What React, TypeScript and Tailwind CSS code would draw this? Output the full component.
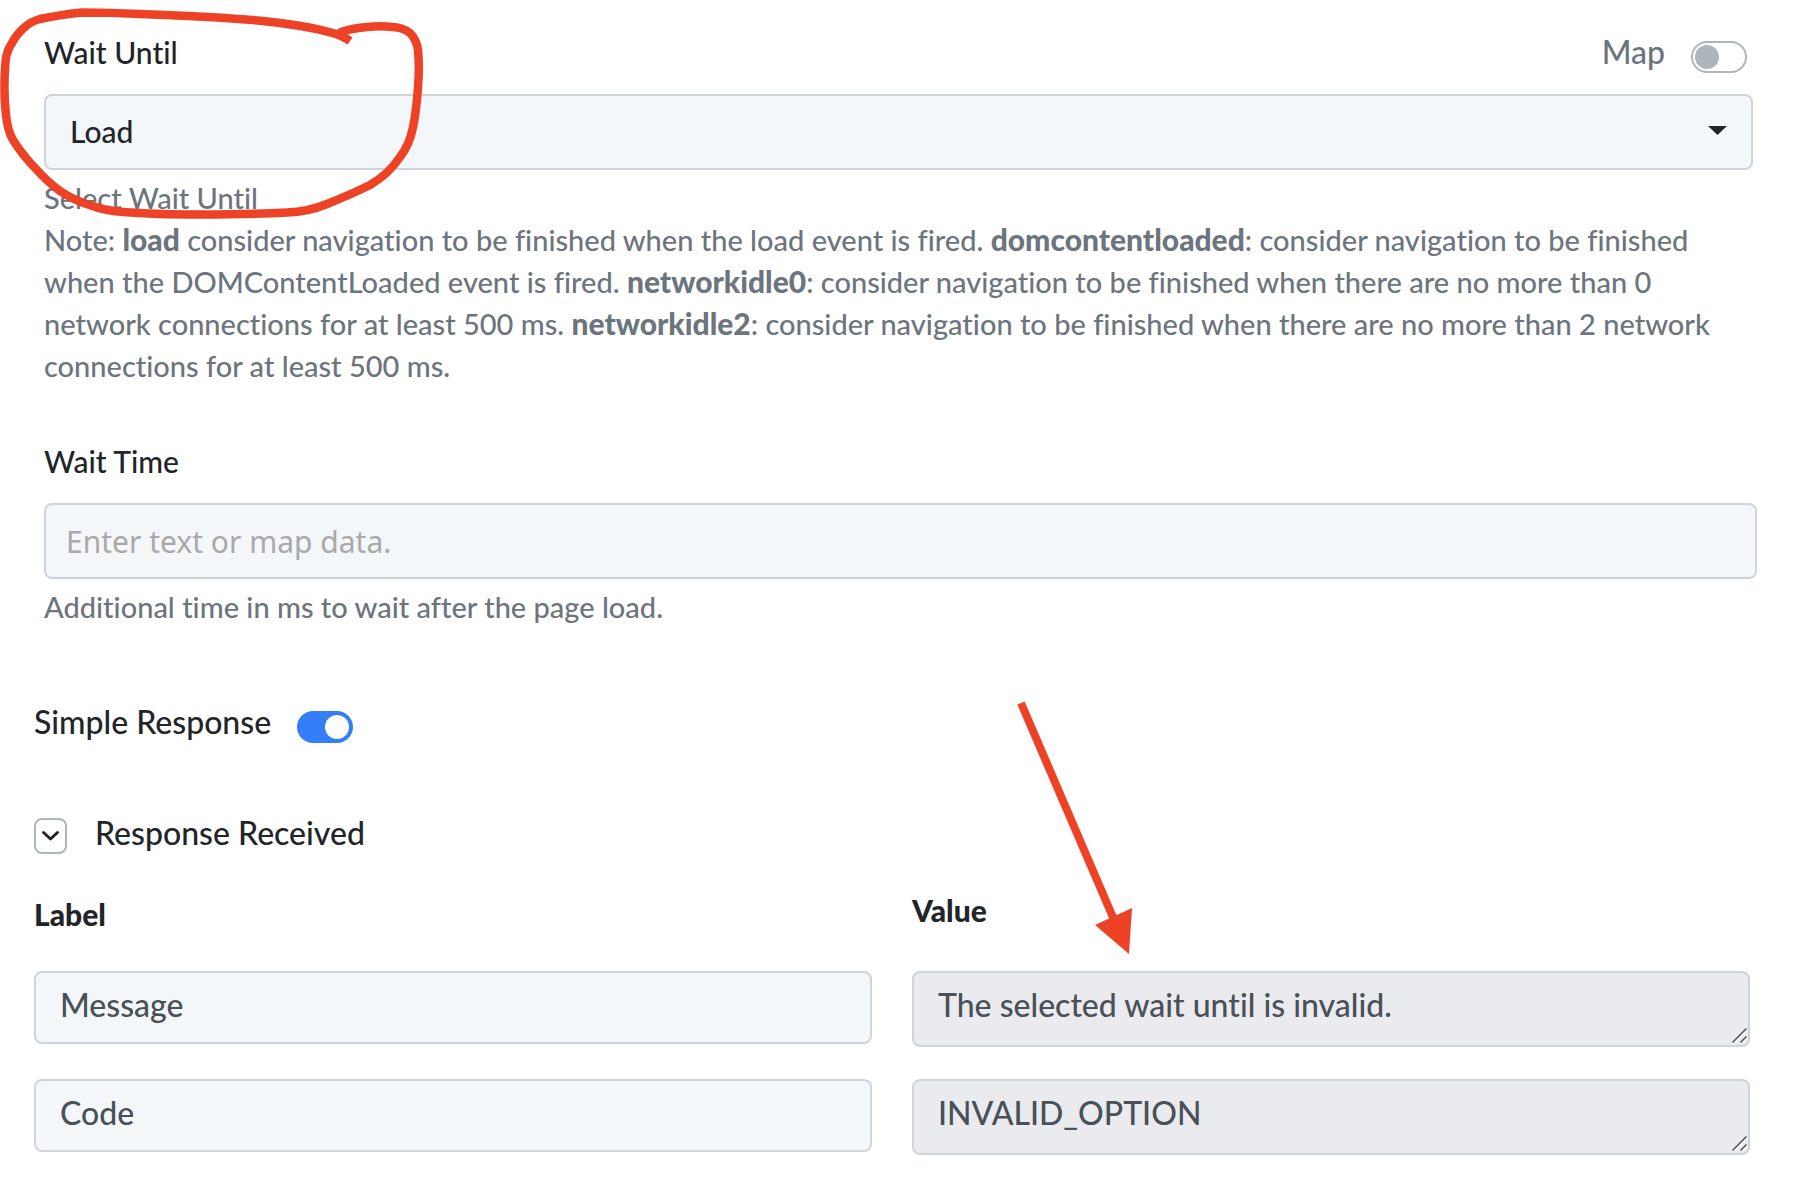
import { useState } from "react";

interface ToggleProps {
  id: string;
  checked: boolean;
  onChange: (checked: boolean) => void;
}

function Toggle({ id, checked, onChange }: ToggleProps) {
  return (
    <input
      id={id}
      type="checkbox"
      role="switch"
      checked={checked}
      onChange={(e) => onChange(e.target.checked)}
      className={`mt-[10px] flex h-8 w-14 shrink-0 cursor-pointer appearance-none items-center rounded-full border-2 px-0.5 before:size-6 before:rounded-full ${
        checked
          ? "justify-end border-[#347ef7] bg-[#347ef7] before:bg-white"
          : "justify-start border-[#adb5bd] bg-white before:bg-[#adb5bd]"
      }`}
    />
  );
}

const RESPONSE_FIELDS = [
  { label: "Message", value: "The selected wait until is invalid." },
  { label: "Code", value: "INVALID_OPTION" },
];

export default function App() {
  const [waitUntil, setWaitUntil] = useState("load");
  const [mapped, setMapped] = useState(false);
  const [waitTime, setWaitTime] = useState("");
  const [simple, setSimple] = useState(true);
  const [open, setOpen] = useState(true);

  return (
    <main className="relative bg-white pt-[31px] pb-7 font-['Lato',sans-serif] text-[30px] leading-[42px] font-medium text-[#212529] [font-variant-ligatures:none]">
      {/* Wait until */}
      <section className="pr-[41px] pl-11">
        <div className="mb-[21px] flex items-center justify-between">
          <label htmlFor="wait-until">Wait Until</label>
          <div className="flex items-center gap-[26px] pr-1.5 text-[#6c757d]">
            <label htmlFor="map" className="text-[32px]">Map</label>
            <Toggle id="map" checked={mapped} onChange={setMapped} />
          </div>
        </div>
        <div className="relative">
          <select
            id="wait-until"
            value={waitUntil}
            onChange={(e) => setWaitUntil(e.target.value)}
            className="block h-[76px] w-full appearance-none rounded-lg border-2 border-[#ced4da] bg-[#f3f7fa] px-6 pb-0.5"
          >
            <option value="load">Load</option>
            <option value="domcontentloaded">DOMContentLoaded</option>
            <option value="networkidle0">Networkidle0</option>
            <option value="networkidle2">Networkidle2</option>
          </select>
          <svg className="pointer-events-none absolute top-8 right-[26px]" width="19" height="9" viewBox="0 0 19 9" fill="#212529">
            <path d="M0 0h19L9.5 9z" />
          </svg>
        </div>
        <div className="mt-[7px] text-[29px] text-[#6c757d]">
          <p>Select Wait Until</p>
          <p>
            Note: <strong className="text-[30px] leading-none font-black">load</strong> consider navigation to be finished when the load
            event is fired. <strong className="text-[30px] leading-none font-black">domcontentloaded</strong>: consider navigation to be
            finished when the DOMContentLoaded event is fired.{" "}
            <strong className="text-[30px] leading-none font-black">networkidle0</strong>: consider navigation to be finished when there
            are no more than 0 network connections for at least 500 ms.{" "}
            <strong className="text-[30px] leading-none font-black">networkidle2</strong>: consider navigation to be finished when there
            are no more than 2 network connections for at least 500 ms.
          </p>
        </div>
      </section>

      {/* Wait time */}
      <section className="mt-[53px] pr-[37px] pl-11">
        <label htmlFor="wait-time" className="mb-[21px] block">Wait Time</label>
        <input
          id="wait-time"
          type="text"
          value={waitTime}
          onChange={(e) => setWaitTime(e.target.value)}
          placeholder="Enter text or map data."
          className="block h-[76px] w-full rounded-lg border-2 border-[#ced4da] bg-[#f3f7fa] px-5 font-['Noto_Sans',sans-serif] font-normal placeholder:text-[#a9a9a9]"
        />
        <p className="mt-[7px] text-[29px] text-[#6c757d]">Additional time in ms to wait after the page load.</p>
      </section>

      {/* Response */}
      <section className="pr-11 pl-[34px] text-[32px]">
        <div className="mt-[73px] flex items-center gap-[26px]">
          <label htmlFor="simple">Simple Response</label>
          <Toggle id="simple" checked={simple} onChange={setSimple} />
        </div>

        <div className="mt-[69px] flex items-center gap-7">
          <button
            type="button"
            aria-label="Toggle response"
            aria-expanded={open}
            onClick={() => setOpen(!open)}
            className="mt-1.5 flex h-9 w-[33px] items-center justify-center rounded-lg border-2 border-[#adb5bd] bg-white"
          >
            <svg width="19" height="12" viewBox="0 0 19 12" fill="none" stroke="#212529" strokeWidth="3" strokeLinecap="round" strokeLinejoin="round">
              <path d="M2.5 2.5L9.5 9L16.5 2.5" />
            </svg>
          </button>
          <h2>Response Received</h2>
        </div>

        {open && (
          <div className="mt-[35px]">
            <div className="mb-9 grid grid-cols-2 gap-10 text-[30px] font-black">
              <span className="pt-1">Label</span>
              <span>Value</span>
            </div>
            <div className="flex flex-col gap-8">
              {RESPONSE_FIELDS.map((field) => (
                <div key={field.label} className="grid grid-cols-2 items-start gap-10 text-[#495057]">
                  <input
                    type="text"
                    aria-label="Label"
                    defaultValue={field.label}
                    className="h-[73px] w-full rounded-lg border-2 border-[#ced4da] bg-[#f3f7fa] px-6 pb-1.5"
                  />
                  <div className="relative">
                    <textarea
                      aria-label={`${field.label} value`}
                      readOnly
                      rows={1}
                      defaultValue={field.value}
                      className="block h-[76px] w-full resize-none overflow-hidden rounded-lg border-2 border-[#ced4da] bg-[#e9ebef] px-6 pt-[11px]"
                    />
                    <svg className="pointer-events-none absolute right-[3px] bottom-1" width="15" height="15" viewBox="0 0 15 15" fill="none" strokeWidth="1.5">
                      <path d="M2 15L15 2M10 15L15 10" stroke="#fff" />
                      <path d="M0.5 14.5L14.5 0.5M8.5 14.5L14.5 8.5" stroke="#505050" />
                    </svg>
                  </div>
                </div>
              ))}
            </div>
          </div>
        )}
      </section>

      {/* Hand-drawn marks */}
      <svg className="pointer-events-none absolute top-0 left-0" width="430" height="225" viewBox="0 0 430 225" fill="none" stroke="#ed4226" strokeWidth="8.5" strokeLinejoin="round">
        <path d="M350 41C346 38 341 36 336 34C312 27 285 23 258 20.5C220 17 180 15.500 140 14C120 13 100 12.500 82 12.500C68 14 54 16 40 19C33 21 29 23 25 27C19 32 15 37 12 43C7 50 6 55 5.500 62C4 80 4 98 6 115C7 125 9 133 13 140C20 151 28 161 37 170C44 178 52 185 60 191C69 197 79 202 90 205C100 209 111 211 123 212C148 214 174 214.500 200 214.500C230 214.500 258 214 287 212.500C302 212 315 209 327 204C342 198 356 192 370 185C382 178 392 169 400 157C407 148 411 138 413 127C416 114 417 101 418 87C419 75 419 61 418 50C417 43 415 38 410 33C405 29 400 27.500 393 27C384 26 376 26 367 27C357 28 348 29 339 33" />
      </svg>
      <svg className="pointer-events-none absolute top-[700px] left-[1016px]" width="118" height="256" viewBox="0 0 118 256">
        <path d="M5 3L99 222" stroke="#ed4226" strokeWidth="8" />
        <path d="M79 225L116 208L113 254Z" fill="#ed4226" />
      </svg>
    </main>
  );
}
